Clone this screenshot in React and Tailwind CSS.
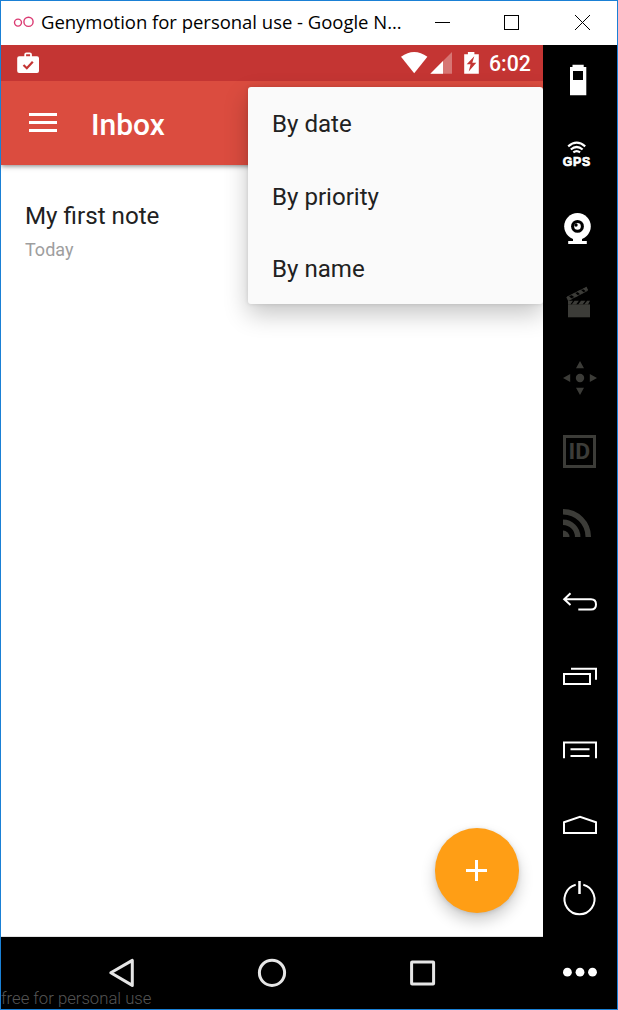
import React from "react";

function TitleBar() {
  return (
    <header className="flex h-11 shrink-0 items-center bg-white">
      <svg className="ml-3 h-4 w-6 shrink-0" viewBox="13 14 24 16" fill="none" stroke="#db3a72" strokeWidth="1.4">
        <circle cx="18" cy="21.6" r="3.5" />
        <circle cx="28.5" cy="20.8" r="4.6" />
      </svg>
      <h1 className="ml-1 w-[372px] shrink-0 whitespace-nowrap pb-0.5 font-['Open_Sans',sans-serif] text-[18.5px] leading-[42px] tracking-[-0.02px] text-black">
        Genymotion for personal use - Google N...
      </h1>
      <svg className="h-11 w-[204px] shrink-0" viewBox="413 1 204 44" fill="none" stroke="#000" shapeRendering="crispEdges">
        <path d="M435 22.5h15" />
        <rect x="504.5" y="15.5" width="14" height="14" />
        <path d="M575 15l15 15M590 15l-15 15" shapeRendering="auto" />
      </svg>
    </header>
  );
}

function StatusBar() {
  return (
    <div className="relative z-10 flex h-9 shrink-0 items-center bg-[#c43533] text-white">
      <svg className="h-9 w-12" viewBox="1 45 48 36">
        <path
          fill="#fff"
          fillRule="evenodd"
          d="M24.3 56.3v-1.8q0-2.1 2.1-2.1h3.4q2.1 0 2.1 2.1v1.8h5.1q2 0 2 2v12.6q0 2-2 2H19.2q-2 0-2-2V58.3q0-2 2-2zm1.8 0h4v-2.1h-4z"
        />
        <path d="M23.5 65l3.3 3.2 6-6.5" fill="none" stroke="#c43533" strokeWidth="2.2" />
      </svg>
      <svg className="ml-auto h-9 w-[84px]" viewBox="398 45 84 36">
        <path d="M414.2 73.2L401 56.8q13.2-9.4 26.4 0z" fill="#fff" />
        <path d="M452 52v21.7h-21.7z" fill="#fff" opacity=".32" />
        <path d="M443 61v12.7h-12.7z" fill="#fff" />
        <path d="M464.2 54.3h3.7v-2.3h6.5v2.3h4.4v19.5h-14.6z" fill="#fff" />
        <path d="M474.3 56.2l-7.6 8h3.9l-1.9 7.2 7.6-8.6h-4z" fill="#c43533" />
      </svg>
      <span className="w-[61px] pl-[7px] pt-0.5 font-[Roboto,sans-serif] text-[21.3px] font-medium leading-[34px]">6:02</span>
    </div>
  );
}

function SortMenu() {
  return (
    <ul className="absolute right-0 top-[42px] z-20 h-[217px] w-[295px] rounded-[3px] bg-[#fafafa] shadow-[0_10px_25px_rgba(0,0,0,0.23),0_0_4px_rgba(0,0,0,0.12)]">
      {["By date", "By priority", "By name"].map((label) => (
        <li key={label} className="h-[72.5px] pl-6 pt-px font-[Roboto,sans-serif] text-[24.1px] leading-[72px] text-[#212121]">
          {label}
        </li>
      ))}
    </ul>
  );
}

function NavBar() {
  return (
    <nav className="relative h-[72px] shrink-0 bg-black">
      <svg className="block h-[72px] w-[542px]" viewBox="1 937 542 72" fill="none" stroke="#e6e6e6" strokeWidth="3" strokeLinejoin="round">
        <path d="M110.8 972.8l21.5-12.4v25z" />
        <circle cx="272" cy="972.8" r="12.6" />
        <rect x="411.6" y="962" width="22" height="22" rx=".5" />
      </svg>
      <span className="absolute bottom-[-1px] left-0 whitespace-nowrap font-[Roboto,sans-serif] text-[16.7px] font-light leading-[22px] text-[#555]">
        free for personal use
      </span>
    </nav>
  );
}

const DIM = "#3c3c38";

const tools = [
  {
    name: "Battery",
    art: <path fill="#fff" fillRule="evenodd" d="M570 67h2.5v-2.3h11.2V67h2.6v28.2H570zm3 4v9h10v-9z" />,
  },
  {
    name: "Location",
    art: (
      <g>
        <g fill="none" stroke="#fff" strokeWidth="2.2">
          <path d="M568.2 146.3q8.5-7.3 17 0" />
          <path d="M570.8 149.5q5.9-5 11.8 0" />
          <path d="M573.3 152.4q3.4-2.6 6.8 0" />
        </g>
        <text x="562.7" y="165.5" textLength="27.5" lengthAdjust="spacing" fill="#fff" stroke="#fff" strokeWidth=".7" className="font-['Liberation_Sans',sans-serif] text-[12.3px] font-bold">GPS</text>
      </g>
    ),
  },
  {
    name: "Camera",
    art: (
      <g>
        <circle cx="577.5" cy="226.3" r="13.3" fill="#fff" />
        <path d="M573 236h9v5h4.8v3h-18.6v-3h4.8z" fill="#fff" />
        <circle cx="577.5" cy="226.4" r="6.4" fill="#000" />
        <circle cx="577.5" cy="226.4" r="3.3" fill="#fff" />
        <circle cx="576" cy="225" r="1.7" fill="#000" />
      </g>
    ),
  },
  {
    name: "Capture",
    art: (
      <g fill={DIM}>
        <path d="M568 304.4h22v12.9h-22z" />
        <path d="M568 304.6v-3.8h5l-2.6 3.8zM574.5 300.8h4.4l-2.8 3.8h-4.4zM581 300.8h4.4l-2.8 3.8h-4.4zM587.2 300.8h2.8l-2 3.8h-3.9z" />
        <path d="M566.3 297.2l2.4-1.2 3.4 2.9-4 2.1zM571.2 294.7l3.8-1.9 3.4 2.9-3.6 1.8zM577 291.6l3.7-1.9 3.3 2.9-3.6 1.8zM582.7 288.8l3.8-1.9 1.7 3-2.4 1.3z" />
        <path d="M567 297l20-9.9M568.5 300.3l19.2-9.8" stroke={DIM} strokeWidth=".8" />
      </g>
    ),
  },
  {
    name: "Remote",
    art: (
      <g fill={DIM}>
        <circle cx="580" cy="378" r="4.2" />
        <path d="M580 361l4 7.2h-8zM580 395l4-7.2h-8zM563 378l7.2-4v8zM597 378l-7.2-4v8z" />
      </g>
    ),
  },
  {
    name: "Identifiers",
    art: (
      <g>
        <rect x="564.5" y="436.5" width="30" height="30" fill="none" stroke={DIM} strokeWidth="3" />
        <text x="568.6" y="459.2" textLength="21.6" lengthAdjust="spacingAndGlyphs" fill={DIM} className="font-[Roboto,sans-serif] text-[22px] font-bold">ID</text>
      </g>
    ),
  },
  {
    name: "Network",
    art: (
      <g>
        <g fill="none" stroke={DIM} strokeWidth="5.5">
          <path d="M563 511.7a25.3 25.3 0 0 1 25.3 25.3" />
          <path d="M563 522.3a14.7 14.7 0 0 1 14.7 14.7" />
        </g>
        <path d="M563 530.5a6.5 6.5 0 0 1 6.5 6.5h-6.5z" fill={DIM} />
      </g>
    ),
  },
  {
    name: "Back",
    art: <path fill="none" stroke="#fff" strokeWidth="2" d="M570.5 593.2l-6.3 6.1 6.3 5.8M564 599.3h27q5 0 5 5.1t-5 5.1h-12.7" />,
  },
  {
    name: "Recent",
    art: <path fill="none" stroke="#fff" strokeWidth="2" d="M564 674h26v10h-26zM571 668.8h25v11" />,
  },
  {
    name: "Menu",
    art: <path fill="none" stroke="#fff" strokeWidth="2" d="M564 758.3v-15.9h32v15.9M570.5 749.3h19M570.5 756h19" />,
  },
  {
    name: "Home",
    art: <path fill="none" stroke="#fff" strokeWidth="2" d="M564 833v-10.7l16-5.4 16 5.4v10.7z" />,
  },
  {
    name: "Power",
    art: (
      <g fill="none" stroke="#fff" strokeWidth="2">
        <path d="M575.7 884.8a15 15 0 1 0 7.6 0" />
        <path d="M579.5 881v13" strokeWidth="2.5" />
      </g>
    ),
  },
  {
    name: "More",
    art: (
      <g fill="#fff">
        <circle cx="567.4" cy="972.2" r="4.4" />
        <circle cx="580" cy="972.2" r="4.4" />
        <circle cx="592.5" cy="972.2" r="4.4" />
      </g>
    ),
  },
];

function Toolbar() {
  return (
    <aside className="flex w-[74px] shrink-0 flex-col bg-black">
      {tools.map((tool, i) => (
        <button key={tool.name} className="h-[74px] w-[74px] shrink-0">
          <svg className="block h-[74px] w-[74px]" viewBox={`543 ${45 + 74 * i} 74 74`}>
            {tool.art}
          </svg>
        </button>
      ))}
    </aside>
  );
}

export default function App() {
  return (
    <div className="flex h-[1010px] w-[618px] flex-col overflow-hidden border border-[#1a80d5] bg-white">
      <TitleBar />
      <div className="flex min-h-0 flex-1">
        <div className="flex w-[542px] shrink-0 flex-col">
          <main className="relative flex h-[892px] flex-col overflow-hidden border-b border-[#e2e2e2] bg-white font-[Roboto,sans-serif]">
            <StatusBar />
            <div className="flex h-[84px] shrink-0 items-center bg-[#db4c3f] shadow-[0_1px_5px_rgba(0,0,0,0.5)]">
              <div className="ml-7 flex w-7 flex-col gap-[5px] pb-px">
                <div className="h-[3px] bg-white" />
                <div className="h-[3px] bg-white" />
                <div className="h-[3px] bg-white" />
              </div>
              <h2 className="ml-[34px] pt-1 text-[30px] font-medium leading-10 text-white">Inbox</h2>
            </div>
            <article className="pl-6 pt-[34px]">
              <h3 className="text-[24.2px] leading-[35px] text-[#212121]">My first note</h3>
              <p className="text-[18px] leading-8 text-[#9e9e9e]">Today</p>
            </article>
            <button className="mb-[23.5px] mr-6 mt-auto flex size-[84.5px] items-center justify-center self-end rounded-full bg-[#ff9e15] shadow-[0_8px_15px_rgba(0,0,0,0.2),0_1px_4px_rgba(0,0,0,0.12)]">
              <svg className="mr-px size-[21px]" viewBox="0 0 21 21" stroke="#fff" strokeWidth="3">
                <path d="M0 10.5h21M10.5 0v21" />
              </svg>
            </button>
            <SortMenu />
          </main>
          <NavBar />
        </div>
        <Toolbar />
      </div>
    </div>
  );
}
